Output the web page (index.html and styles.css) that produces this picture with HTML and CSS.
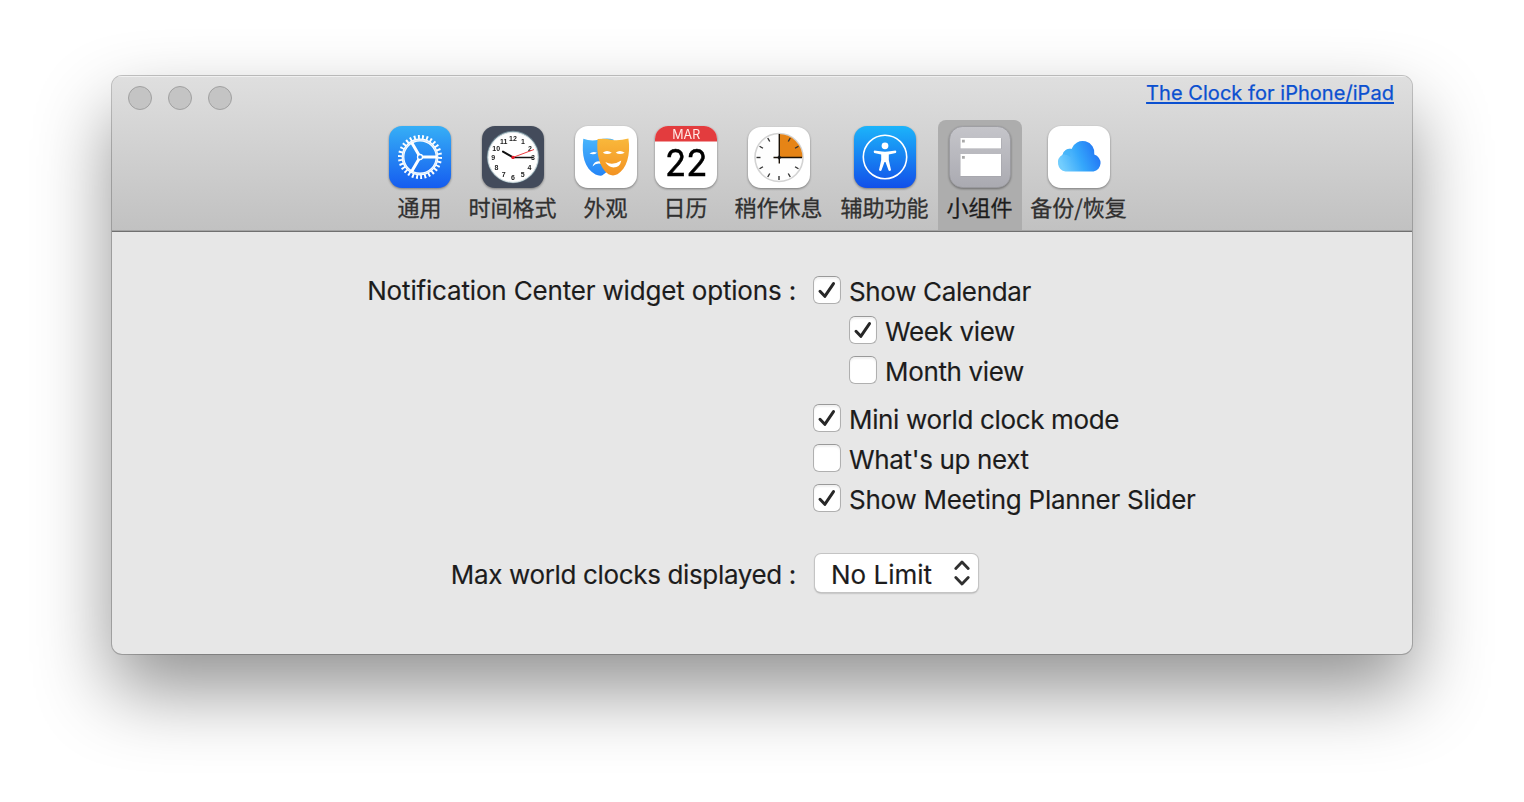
FILE: index.html
```html
<!DOCTYPE html>
<html lang="zh-CN">
<head>
<meta charset="utf-8">
<title>小组件</title>
<link rel="stylesheet" href="styles.css">
</head>
<body>
<main class="window">
  <header class="toolbar">
    <div class="titlebar">
      <div class="lights"><i class="light"></i><i class="light"></i><i class="light"></i></div>
      <a class="promo">The Clock for iPhone/iPad</a>
    </div>
    <nav class="tabs">
      <div class="tab tab-2">
        <svg class="icon" viewBox="0 0 64 64">
          <defs><linearGradient id="blueA" x2="0" y2="1"><stop stop-color="#36aff6"/><stop offset="1" stop-color="#155cf0"/></linearGradient></defs>
          <rect x="1" y="1" width="62" height="62" rx="13" fill="url(#blueA)"/>
          <g fill="none" stroke="#fff">
            <circle cx="32" cy="32" r="19.800" stroke-width="4.400" stroke-dasharray=".9 1.1" pathLength="60"/>
            <circle cx="32" cy="32" r="17" stroke-width="2.800"/>
            <circle cx="32" cy="32" r="17" stroke-width=".4" stroke="#8cc5fb"/>
            <path d="M34.500 32H49M30.800 29.800L23.500 17.200M30.800 34.200L23.500 46.800" stroke-width="3"/>
            <circle cx="32" cy="32" r="2.500" stroke-width="1.300"/>
          </g>
        </svg>
        <span class="label">通用</span>
      </div>
      <div class="tab tab-4">
        <svg class="icon" viewBox="0 0 64 64">
          <rect x="1" y="1" width="62" height="62" rx="13" fill="#434b5b"/>
          <circle cx="32" cy="32" r="26.200" fill="#6f8793"/>
          <circle cx="32" cy="32.300" r="25" fill="#fff" stroke="#d8e1e4" stroke-width="1"/>
          <g class="numerals" text-anchor="middle">
            <text x="32" y="15.500">12</text><text x="42" y="18.800">1</text><text x="49" y="25.600">2</text><text x="52" y="35.200">3</text><text x="48.500" y="45">4</text><text x="41.600" y="52">5</text><text x="32" y="54.600">6</text><text x="22.700" y="52">7</text><text x="15.500" y="45">8</text><text x="12.300" y="35.200">9</text><text x="15.200" y="25.600">10</text><text x="22.700" y="18.800">11</text>
          </g>
          <path d="M32 32.400L22 26.600" stroke="#111" stroke-width="2" stroke-linecap="round"/>
          <path d="M32 32.500h20" stroke="#111" stroke-width="1.500"/>
          <path d="M32 32.400L53 24.500" stroke="#f03d42" stroke-width="1"/>
          <circle cx="32" cy="32.400" r="1.700" fill="#e81c28"/>
        </svg>
        <span class="label">时间格式</span>
      </div>
      <div class="tab tab-2">
        <svg class="icon" viewBox="0 0 64 64">
          <defs>
            <linearGradient id="maskA" x2="0" y2="1"><stop stop-color="#49b5fb"/><stop offset="1" stop-color="#2585f7"/></linearGradient>
            <linearGradient id="maskB" x2="0" y2="1"><stop stop-color="#f9b83b"/><stop offset="1" stop-color="#f39322"/></linearGradient>
          </defs>
          <rect x="1" y="1" width="62" height="62" rx="13" fill="#fff"/>
          <path d="M9.300 13.800Q17 16.500 24.500 14.700Q33 12.600 39.500 14.400V32Q38 45 28 50.500Q24.500 51 21.500 49.500C10 43 7.500 30 9.300 13.800Z" fill="url(#maskA)"/>
          <path d="M15.500 28.500q3.500-2.600 7.500-.8q-3 2.600-7.500.8zM18.500 41.500Q20 35.200 28 36.500V39Q22 37.500 18.500 41.500Z" fill="#fff"/>
          <path d="M23.600 14Q31 13 38.200 15Q46 15.800 54.400 13.600C57 30 52.500 44 43.500 49.300Q39 51.500 34.500 49.300C25 43 22.200 28 23.600 14Z" fill="url(#maskB)"/>
          <path d="M28.800 27.800q4-3.800 9 0q-4.700 2.400-9 0zM41.700 27.800q4-3.800 9 0q-4.700 2.400-9 0zM31.300 37Q39 41 47.300 35.500Q46 42.500 39.500 42.500Q34.500 42.300 31.300 37Z" fill="#fff"/>
        </svg>
        <span class="label">外观</span>
      </div>
      <div class="tab tab-2">
        <svg class="icon" viewBox="0 0 64 64">
          <rect x="1" y="1" width="62" height="62" rx="13" fill="#fff"/>
          <path d="M1 16.500V14A13 13 0 0 1 14 1H50A13 13 0 0 1 63 14V16.500Z" fill="#e33c3e"/>
          <text class="cal-month" x="32.200" y="13.500" text-anchor="middle" textLength="28">MAR</text>
          <text class="cal-day" x="32.300" y="51" text-anchor="middle" textLength="42.500" lengthAdjust="spacingAndGlyphs">22</text>
        </svg>
        <span class="label">日历</span>
      </div>
      <div class="tab tab-4">
        <svg class="icon" viewBox="0 0 64 64">
          <rect x="1" y="2" width="62" height="61" rx="13" fill="#fff"/>
          <circle cx="32" cy="32.500" r="24" fill="#fefefe" stroke="#d3d3d3" stroke-width="1.600"/>
          <path d="M32 32.500V9A23.500 23.500 0 0 1 55.500 32.500Z" fill="#e68416"/>
          <g stroke="#333" stroke-width="1.400">
            <path d="M32 51v4"/><path d="M32 51v4" transform="rotate(30 32 32.500)"/><path d="M32 51v4" transform="rotate(60 32 32.500)"/><path d="M32 51v4" transform="rotate(90 32 32.500)"/><path d="M32 51v4" transform="rotate(120 32 32.500)"/><path d="M32 51v4" transform="rotate(150 32 32.500)"/><path d="M32 51v4" transform="rotate(210 32 32.500)"/><path d="M32 51v4" transform="rotate(240 32 32.500)"/><path d="M32 51v4" transform="rotate(300 32 32.500)"/><path d="M32 51v4" transform="rotate(330 32 32.500)"/>
            <path d="M26.500 32.500H55M32.300 9v29.500" stroke="#1b1005"/>
          </g>
          <path d="M32.300 29.500l1 2 2 1-2 1-1 2-1-2-2-1 2-1z" fill="#111"/>
        </svg>
        <span class="label">稍作休息</span>
      </div>
      <div class="tab tab-4">
        <svg class="icon" viewBox="0 0 64 64">
          <defs><linearGradient id="blueB" x2="0" y2="1"><stop stop-color="#1cb4fa"/><stop offset="1" stop-color="#124fe9"/></linearGradient></defs>
          <rect x="1" y="1" width="62" height="62" rx="13" fill="url(#blueB)"/>
          <circle cx="32" cy="32" r="21.700" fill="none" stroke="#fff" stroke-width="1.600"/>
          <circle cx="32" cy="20.800" r="3.400" fill="#fff"/>
          <path d="M21.300 25.600L29 26.500Q32 26.800 35 26.500L42.700 25.600Q44 27 42.800 28L35.800 29.500V35L38 45Q37 46.600 35.600 45.500L32.500 37H31.500L28.400 45.500Q27 46.600 26 45L28.200 35V29.500L21.200 28Q20 27 21.300 25.600Z" fill="#fff"/>
        </svg>
        <span class="label">辅助功能</span>
      </div>
      <div class="tab tab-3 selected">
        <svg class="icon" viewBox="0 0 64 64">
          <defs><linearGradient id="greyA" x2="0" y2="1"><stop stop-color="#c5c5ca"/><stop offset="1" stop-color="#aaaab1"/></linearGradient></defs>
          <rect x="1.500" y="1.500" width="61" height="61" rx="13" fill="url(#greyA)" stroke="#9a9a9f" stroke-width=".8"/>
          <path d="M12.500 13.500H53.500V24H12.500ZM12.500 29.500H53.500V51.500H12.500Z" fill="#a2a2a8"/>
          <path d="M12.500 13H53V23.400H12.500ZM12.500 29H53V50.900H12.500Z" fill="#fff"/>
          <path d="M14 14.800h2.800v2.800h-2.800zM14 31h2.800v2.800h-2.800z" fill="#aaa"/>
        </svg>
        <span class="label">小组件</span>
      </div>
      <div class="tab tab-5">
        <svg class="icon" viewBox="0 0 64 64">
          <defs>
            <linearGradient id="cloud" x1="0" x2="1" y1=".5" y2=".2"><stop stop-color="#72cdfd"/><stop offset=".45" stop-color="#35a7fb"/><stop offset="1" stop-color="#1e6cf3"/></linearGradient>
          </defs>
          <rect x="1" y="1" width="62" height="62" rx="13" fill="#fff"/>
          <path d="M18.500 46.500A9 9 0 0 1 15.500 29.800A7.800 7.800 0 0 1 24.500 23.900A11.800 11.800 0 0 1 47.300 29.600A8.700 8.700 0 0 1 46.500 46.500Z" fill="url(#cloud)"/>
          <path d="M15.500 29.800A7.800 7.800 0 0 1 24.500 23.900Q22.500 27 23.500 32Q20 28.500 15.500 29.800Z" fill="#42b2f8" opacity=".7"/>
        </svg>
        <span class="label">备份/恢复</span>
      </div>
    </nav>
  </header>
  <section class="pane">
    <div class="row">
      <div class="caption"><span class="t-notif">Notification Center widget options :</span></div>
      <div class="options">
        <div class="option"><i class="box"><svg viewBox="0 0 28 28"><path class="check" d="M7 15.300L11.800 20.300L20.500 7.600"/></svg></i><span class="tight">Show Calendar</span></div>
        <div class="option sub"><i class="box"><svg viewBox="0 0 28 28"><path class="check" d="M7 15.300L11.800 20.300L20.500 7.600"/></svg></i><span class="tight">Week view</span></div>
        <div class="option sub"><i class="box"></i><span class="tight">Month view</span></div>
        <div class="option spaced"><i class="box"><svg viewBox="0 0 28 28"><path class="check" d="M7 15.300L11.800 20.300L20.500 7.600"/></svg></i><span class="tight">Mini world clock mode</span></div>
        <div class="option"><i class="box"></i><span class="tight">What's up next</span></div>
        <div class="option"><i class="box"><svg viewBox="0 0 28 28"><path class="check" d="M7 15.300L11.800 20.300L20.500 7.600"/></svg></i><span class="t-slider">Show Meeting Planner Slider</span></div>
      </div>
    </div>
    <div class="row limit">
      <div class="caption"><span class="tight">Max world clocks displayed :</span></div>
      <div class="select"><span>No Limit</span><svg class="chevrons" viewBox="0 0 16 26"><path d="M1.800 8.500L8 2L14.200 8.500M1.800 17.500L8 24L14.200 17.500"/></svg></div>
    </div>
  </section>
</main>
</body>
</html>
```
FILE: styles.css
```css
* { box-sizing: border-box; }
body {
  margin: 0;
  width: 1524px;
  height: 802px;
  padding: 76px 112px;
  overflow: hidden;
  background: #fff;
  font-family: Inter, "Noto Sans CJK SC", sans-serif;
  color: #1c1c1c;
}
.window {
  width: 1300px;
  height: 578px;
  border-radius: 10px;
  background: #e7e7e7;
  overflow: hidden;
  box-shadow: 0 0 0 1px rgba(0,0,0,.22), 0 36px 76px rgba(0,0,0,.43);
}
.toolbar {
  height: 156px;
  background: linear-gradient(#dfdfdf, #c1c1c1);
  border-bottom: 1px solid #707070;
  box-shadow: inset 0 1px 0 #f0f0f0, inset 0 -1px 0 #a4a4a4;
}
.titlebar {
  display: flex;
  justify-content: space-between;
  height: 44px;
  padding: 0 18px 0 16px;
}
.lights { display: flex; gap: 16px; padding-top: 10px; }
.light {
  width: 24px;
  height: 24px;
  border-radius: 50%;
  background: #c4c4c4;
  border: 1.5px solid #a0a0a0;
}
.promo {
  padding-top: 4px;
  font-size: 20px;
  line-height: 26px;
  letter-spacing: .05px;
  color: #0b50d0;
  -webkit-text-stroke: .25px #0b50d0;
  text-decoration: underline;
  text-decoration-thickness: 2px;
  text-underline-offset: 2px;
}
.tabs { display: flex; height: 110px; padding-left: 268px; }
.tab {
  display: flex;
  flex-direction: column;
  align-items: center;
  padding-top: 5px;
}
.tab-2 { width: 80px; }
.tab-3 { width: 84px; }
.tab-4 { width: 106px; }
.tab-5 { width: 114px; }
.selected { background: #adadad; border-radius: 8px 8px 0 0; }
.icon {
  display: block;
  width: 64px;
  height: 64px;
  filter: drop-shadow(0 1px 1px rgba(0,0,0,.4));
}
.label {
  margin: 1px 1px 0 0;
  font-family: "Noto Sans CJK SC", sans-serif;
  font-size: 22px;
  line-height: 32px;
  color: #303030;
  -webkit-text-stroke: .3px;
  white-space: nowrap;
}
.selected .label { color: #1d1d1d; }
.numerals { font: bold 7px "Liberation Sans", sans-serif; fill: #222; }
.cal-month { font: 12.500px Inter, sans-serif; fill: #ffe9e5; }
.cal-day { font: 37px Inter, sans-serif; fill: #000; stroke: #000; stroke-width: .5px; }
.pane { padding-top: 40px; font-size: 26px; line-height: 40px; -webkit-text-stroke: .15px; }
.tight { letter-spacing: -.35px; }
.t-notif { letter-spacing: -.17px; }
.t-slider { letter-spacing: -.26px; }
.row { display: flex; gap: 17px; }
.caption { width: 684px; text-align: right; white-space: nowrap; }
.row .caption { margin-top: -1px; }
.option { display: flex; gap: 8px; height: 40px; white-space: nowrap; }
.sub { margin-left: 36px; }
.spaced { margin-top: 8px; }
.box {
  width: 28px;
  height: 28px;
  margin-top: 4px;
  border-radius: 6px;
  background: #fff;
  border: 1px solid #b0b0b0;
  border-top-color: #999;
  box-shadow: inset 0 2px 2px rgba(0,0,0,.06);
}
.box svg { display: block; width: 28px; height: 28px; margin: -1px; }
.check { fill: none; stroke: #272727; stroke-width: 3; stroke-linecap: round; stroke-linejoin: round; }
.limit { margin-top: 34px; }
.limit .caption { margin-top: 1px; }
.select {
  display: flex;
  justify-content: space-between;
  align-items: center;
  width: 163px;
  height: 38px;
  margin: 0 0 0 2px;
  padding: 4px 8px 0 16px;
  border-radius: 6px;
  background: #fff;
  box-shadow: 0 0 0 1px #c4c4c4, 0 1px 2px rgba(0,0,0,.45);
  white-space: nowrap;
}
.chevrons { width: 16px; height: 26px; margin-top: -4px; fill: none; stroke: #303030; stroke-width: 2.800; stroke-linecap: round; stroke-linejoin: round; }
```
